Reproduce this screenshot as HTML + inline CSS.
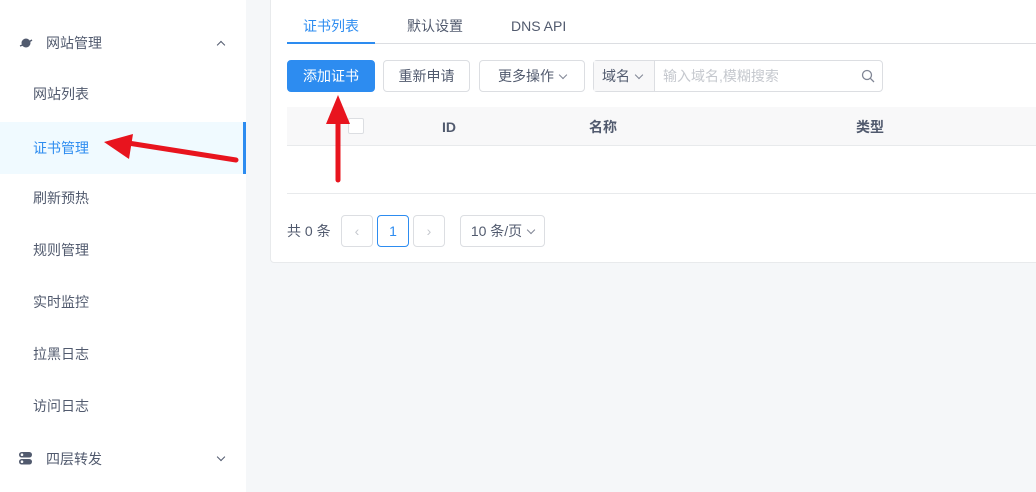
<!DOCTYPE html>
<html><head><meta charset="utf-8"><style>
*{margin:0;padding:0;box-sizing:border-box}
body{width:1036px;height:492px;overflow:hidden;background:#f5f7f9;font-family:"Liberation Sans","Noto Sans CJK SC",sans-serif;font-size:14px;color:#515a6e;position:relative}
.a{position:absolute}
.side{left:0;top:0;width:246px;height:492px;background:#fff}
.it{position:absolute;left:0;width:246px;height:52px;line-height:52px;padding-left:33px;color:#515a6e}
.card{left:270px;top:-10px;width:800px;height:273px;background:#fff;border:1px solid #e8eaec;border-radius:4px}
.btn{position:absolute;top:60px;height:32px;border:1px solid #dcdee2;border-radius:4px;background:#fff;text-align:center;line-height:30px;color:#515a6e}
.pg{position:absolute;top:215px;height:32px;border:1px solid #dcdee2;border-radius:4px;background:#fff;text-align:center;line-height:30px;color:#c5c8ce}
.chev{display:inline-block;width:6px;height:6px;border-right:1px solid #808695;border-bottom:1px solid #808695;transform:rotate(45deg);vertical-align:3px;margin-left:6px}
</style></head><body>
<div class="a side">
  <div class="it" style="top:17px;padding-left:46px">网站管理</div>
  <svg class="a" style="left:19px;top:37px" width="14" height="12" viewBox="0 0 14 12"><ellipse cx="7" cy="6" rx="4.5" ry="4.5" fill="#515a6e"/><path d="M1 9 Q7 7 13 3" stroke="#515a6e" stroke-width="1.4" fill="none"/></svg>
  <span class="a" style="left:218px;top:42px;width:6px;height:6px;border-left:1.5px solid #515a6e;border-top:1.5px solid #515a6e;transform:rotate(45deg)"></span>
  <div class="it" style="top:68px">网站列表</div>
  <div class="it" style="top:122px;background:#f0faff;color:#2d8cf0">证书管理</div>
  <div class="a" style="left:243px;top:122px;width:3px;height:52px;background:#2d8cf0"></div>
  <div class="it" style="top:172px">刷新预热</div>
  <div class="it" style="top:224px">规则管理</div>
  <div class="it" style="top:276px">实时监控</div>
  <div class="it" style="top:328px">拉黑日志</div>
  <div class="it" style="top:380px">访问日志</div>
  <div class="it" style="top:433px;padding-left:46px">四层转发</div>
  <svg class="a" style="left:19px;top:452px" width="13" height="13" viewBox="0 0 13 13"><rect x="0" y="0" width="13" height="5.5" rx="2.7" fill="#515a6e"/><rect x="0" y="7" width="13" height="5.5" rx="2.7" fill="#515a6e"/><circle cx="3" cy="2.7" r="1.3" fill="#fff"/><circle cx="3" cy="9.7" r="1.3" fill="#fff"/></svg>
  <span class="a" style="left:218px;top:454px;width:6px;height:6px;border-right:1.5px solid #515a6e;border-bottom:1.5px solid #515a6e;transform:rotate(45deg)"></span>
</div>
<div class="a card"></div>
<div class="a" style="left:303px;top:16px;color:#2d8cf0">证书列表</div>
<div class="a" style="left:407px;top:16px">默认设置</div>
<div class="a" style="left:511px;top:18px">DNS API</div>
<div class="a" style="left:287px;top:43px;width:760px;height:1px;background:#dcdee2"></div>
<div class="a" style="left:287px;top:42px;width:88px;height:2px;background:#2d8cf0"></div>
<div class="btn" style="left:287px;width:88px;background:#2d8cf0;border-color:#2d8cf0;color:#fff">添加证书</div>
<div class="btn" style="left:383px;width:87px">重新申请</div>
<div class="btn" style="left:479px;width:106px">更多操作<span class="chev"></span></div>
<div class="btn" style="left:593px;width:290px;text-align:left">
  <div class="a" style="left:0;top:0;width:61px;height:30px;background:#f8f8f9;border-right:1px solid #dcdee2;padding-left:8px">域名<span class="chev"></span></div>
  <div class="a" style="left:69px;top:0;color:#c5c8ce">输入域名,模糊搜索</div>
  <svg class="a" style="left:267px;top:8px" width="14" height="14" viewBox="0 0 14 14"><circle cx="6" cy="6" r="4.5" stroke="#808695" stroke-width="1.3" fill="none"/><path d="M9.3 9.3L13 13" stroke="#808695" stroke-width="1.3"/></svg>
</div>
<div class="a" style="left:287px;top:107px;width:760px;height:39px;background:#f8f8f9;border-bottom:1px solid #e8eaec"></div>
<div class="a" style="left:348px;top:118px;width:16px;height:16px;border:1px solid #dcdee2;border-radius:2px;background:#fff"></div>
<div class="a" style="left:442px;top:119px;font-weight:bold;color:#515a6e">ID</div>
<div class="a" style="left:589px;top:117px;font-weight:bold;color:#515a6e">名称</div>
<div class="a" style="left:856px;top:117px;font-weight:bold;color:#515a6e">类型</div>
<div class="a" style="left:287px;top:193px;width:760px;height:1px;background:#e8eaec"></div>
<div class="a" style="left:287px;top:221px">共 0 条</div>
<div class="pg" style="left:341px;width:32px">‹</div>
<div class="pg" style="left:377px;width:32px;border-color:#2d8cf0;color:#2d8cf0">1</div>
<div class="pg" style="left:413px;width:32px">›</div>
<div class="pg" style="left:460px;width:85px;color:#515a6e">10 条/页<span class="chev"></span></div>
<svg class="a" style="left:0;top:0" width="1036" height="492">
  <path d="M236 160 L128 143" stroke="#e8141e" stroke-width="5" stroke-linecap="round"/>
  <path d="M104 142 L133 134 L129 159 Z" fill="#e8141e"/>
  <path d="M338 180 L338 118" stroke="#e8141e" stroke-width="5" stroke-linecap="round"/>
  <path d="M338 95 L326 124 L350 124 Z" fill="#e8141e"/>
</svg>
</body></html>
